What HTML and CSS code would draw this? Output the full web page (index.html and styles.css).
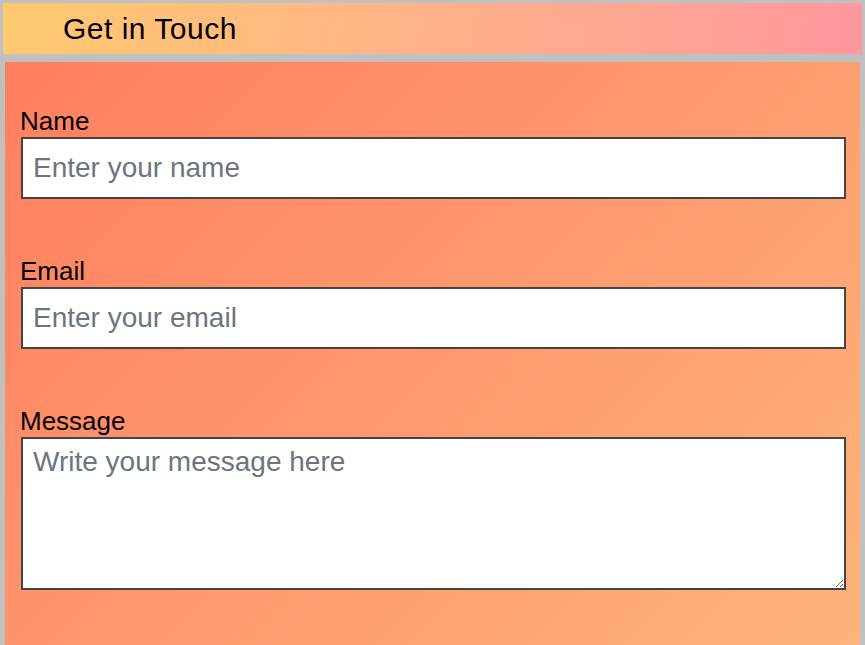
FILE: index.html
```html
<!DOCTYPE html>
<html lang="en">
<head>
<meta charset="utf-8">
<title>Get in Touch</title>
<link rel="stylesheet" href="styles.css">
</head>
<body>
  <header class="title-bar">
    <h1 class="title">Get in Touch</h1>
  </header>
  <main class="panel">
    <form class="contact-form">
      <div class="field">
        <label class="label" for="name">Name</label>
        <input class="input" id="name" type="text" placeholder="Enter your name">
      </div>
      <div class="field">
        <label class="label" for="email">Email</label>
        <input class="input" id="email" type="email" placeholder="Enter your email">
      </div>
      <div class="field field-last">
        <label class="label" for="message">Message</label>
        <textarea class="textarea" id="message" placeholder="Write your message here"></textarea>
      </div>
    </form>
  </main>
</body>
</html>
```

FILE: styles.css
```css
html, body {
  margin: 0;
  height: 100%;
  overflow: hidden;
}

body {
  background: #c0c0c0;
  padding: 3px 3px 0 3px;
  box-sizing: border-box;
  font-family: "Liberation Sans", Arial, sans-serif;
  color: #000;
}

.title-bar {
  height: 51px;
  background: linear-gradient(100deg, #ffc96f 0%, #ffb486 45%, #ff979f 100%);
  padding-left: 60px;
  box-sizing: border-box;
  display: flex;
  align-items: center;
}

.title {
  margin: 0;
  font-size: 30px;
  font-weight: normal;
  line-height: 51px;
  letter-spacing: 0.5px;
}

.panel {
  margin: 8px 2px 0 2px;
  background: linear-gradient(135deg, #ff7e5f 0%, #feb47b 100%);
  padding: 44px 14px 60px 16px;
  box-sizing: border-box;
  height: 590px;
}

.contact-form {
  display: flex;
  flex-direction: column;
  gap: 57px;
}

.field {
  display: flex;
  flex-direction: column;
}

.label {
  font-size: 26px;
  line-height: 30px;
  margin-left: -1px;
  margin-bottom: 1px;
}

.input,
.textarea {
  font-family: "Liberation Sans", Arial, sans-serif;
  font-size: 28px;
  color: #333;
  background: #fff;
  border: 2px solid #444;
  border-radius: 0;
  box-sizing: border-box;
  width: 100%;
  margin: 0;
  outline: none;
}

.input {
  height: 62px;
  padding: 0 10px;
}

.textarea {
  height: 153px;
  padding: 7px 10px;
  resize: both;
  display: block;
}

.input::placeholder,
.textarea::placeholder {
  color: #6c757d;
  opacity: 1;
}
```
